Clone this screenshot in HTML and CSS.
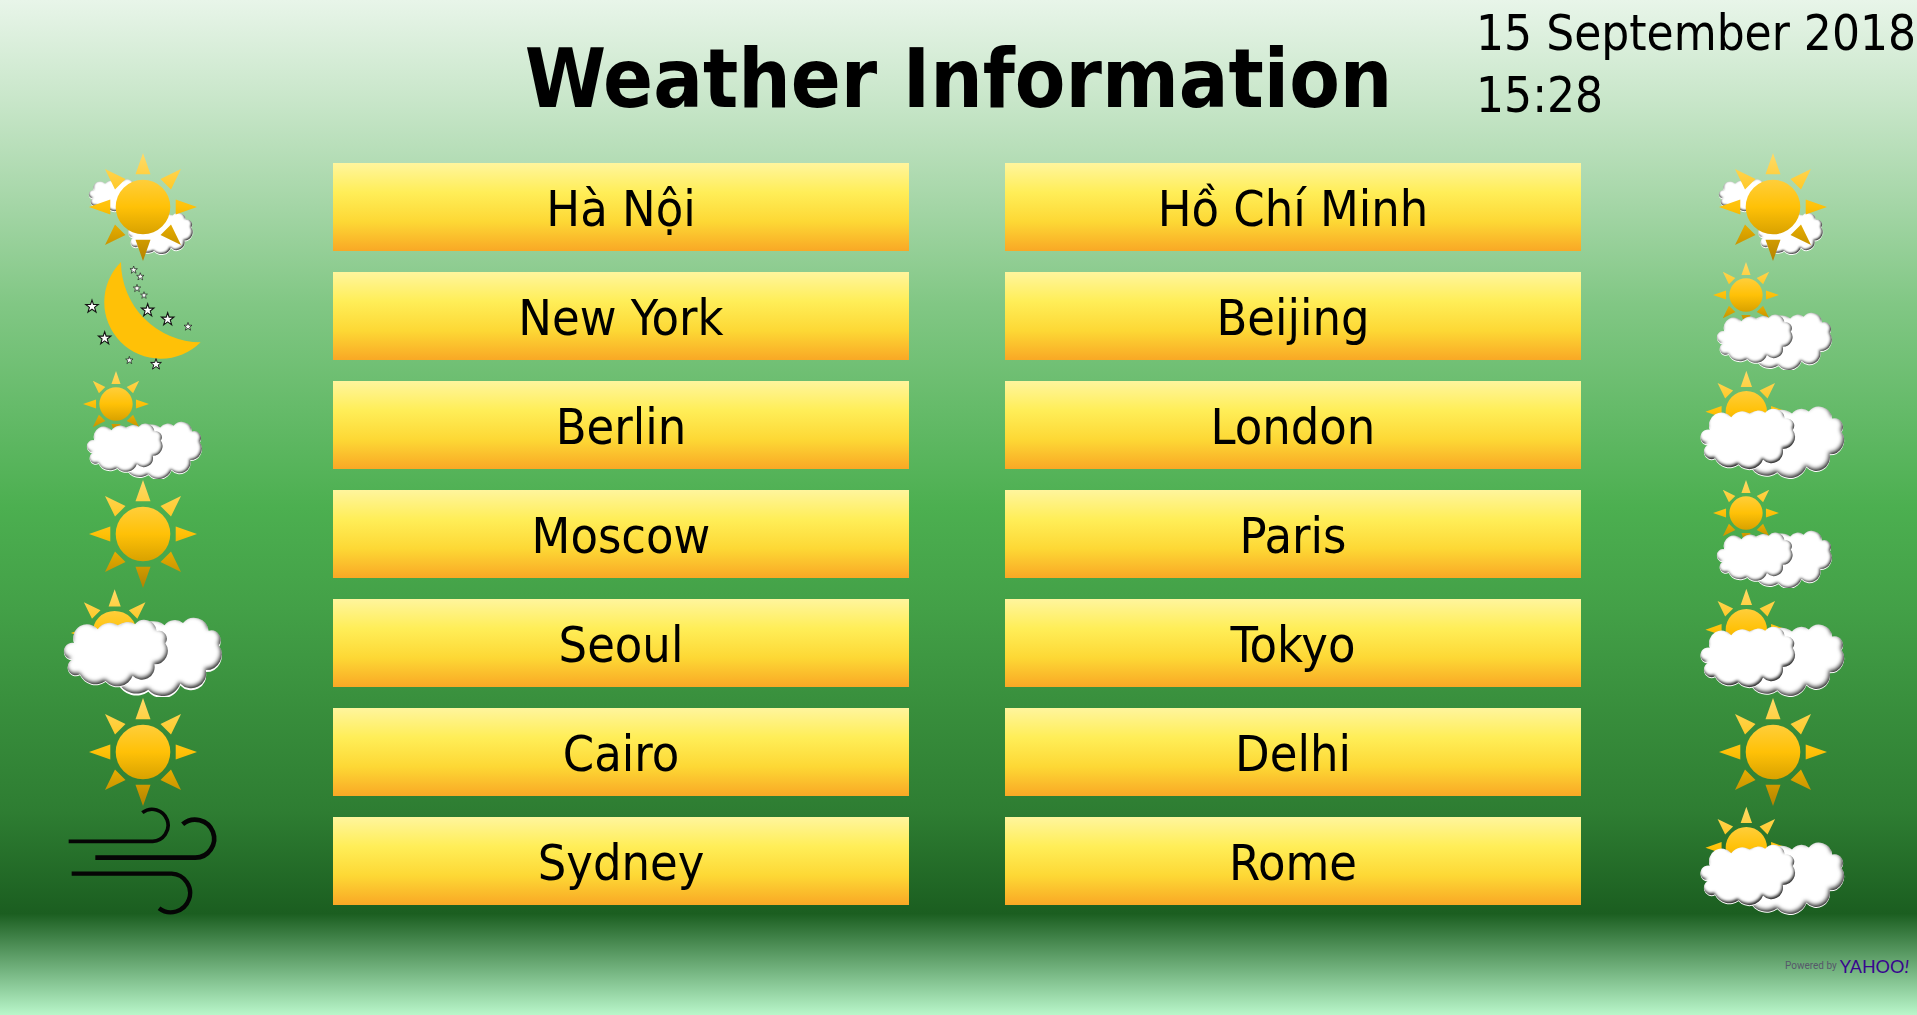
FILE: index.html
```html
<!DOCTYPE html>
<html lang="en">
<head>
<meta charset="utf-8">
<meta name="viewport" content="width=device-width, initial-scale=1">
<title>Weather Information</title>
<link rel="stylesheet" href="styles.css">
</head>
<body>
<svg class="defs" aria-hidden="true" width="0" height="0">
  <defs>
    <linearGradient id="sun-fill" gradientUnits="userSpaceOnUse" x1="0" y1="-54" x2="0" y2="54">
      <stop offset="0" stop-color="#ffdb69"/>
      <stop offset=".25" stop-color="#ffce3a"/>
      <stop offset=".5" stop-color="#ffc107"/>
      <stop offset=".75" stop-color="#d9a200"/>
      <stop offset="1" stop-color="#b38200"/>
    </linearGradient>
    <filter id="bevel" x="-5%" y="-5%" width="110%" height="112%" color-interpolation-filters="sRGB">
      <feFlood flood-color="#222" result="dark"/>
      <feComposite in="dark" in2="SourceAlpha" operator="out" result="outside"/>
      <feGaussianBlur in="outside" stdDeviation="6" result="soft"/>
      <feOffset in="soft" dx="-3" dy="-5" result="moved"/>
      <feComposite in="moved" in2="SourceAlpha" operator="in" result="shade"/>
      <feOffset in="SourceGraphic" dx="1" dy="4" result="rim"/>
      <feMerge>
        <feMergeNode in="rim"/>
        <feMergeNode in="SourceGraphic"/>
        <feMergeNode in="shade"/>
      </feMerge>
    </filter>
    <g id="sun" fill="url(#sun-fill)">
      <path d="M-27.3 0a27.3 27.3 0 1 0 54.6 0a27.3 27.3 0 1 0-54.6 0ZM0-54L-7.5-32.7H7.5ZM54 0L32.7-7.5V7.5ZM0 54L-7.5 32.7H7.5ZM-54 0L-32.7-7.5V7.5ZM-38-38L-28-17.5L-17.5-28ZM38-38L28-17.5L17.5-28ZM38 38L28 17.5L17.5 28ZM-38 38L-28 17.5L-17.5 28Z"/>
    </g>
    <path id="cloud" fill="#fff" filter="url(#bevel)" d="M72 235A25 25 0 1 1 68 188A41 41 0 0 1 138 147A44 44 0 0 1 203 138A33 33 0 0 1 250 132A37 37 0 0 1 315 152A24 24 0 0 1 341 189A40 40 0 0 1 308 252A38 38 0 0 1 243 286A48 48 0 0 1 162 302A52 52 0 0 1 85 282A25 25 0 1 1 72 235Z"/>
    <g id="cloud-pair">
      <use href="#cloud" transform="translate(99 -28) scale(1.18)"/>
      <use href="#cloud"/>
    </g>
    <path id="star" fill="#fff" stroke="#111" stroke-width="3" d="M0-18L4-6H17L7 2L11 15L0 7L-11 15L-7 2L-17-6H-4Z"/>
    <symbol id="icon-sunny" viewBox="34 0 480 324">
      <use href="#sun" transform="translate(274 162) scale(3)"/>
    </symbol>
    <symbol id="icon-fair" viewBox="34 0 480 324">
      <use href="#cloud" transform="translate(94 22) scale(.48)"/>
      <use href="#cloud" transform="translate(207 106) scale(.62)"/>
      <use href="#sun" transform="translate(274 162) scale(3)"/>
    </symbol>
    <symbol id="icon-partly" viewBox="34 0 480 324">
      <use href="#sun" transform="translate(193 99) scale(1.83)"/>
      <use href="#cloud-pair" transform="translate(79 71) scale(.728)"/>
    </symbol>
    <symbol id="icon-mostly" viewBox="34 0 480 324">
      <use href="#sun" transform="translate(194 122) scale(2.27)"/>
      <use href="#cloud-pair" transform="translate(23 5) scale(.91)"/>
    </symbol>
    <symbol id="icon-overcast" viewBox="34 0 480 324">
      <use href="#sun" transform="translate(189 132) scale(2.43)"/>
      <use href="#cloud-pair" transform="translate(0 -26)"/>
    </symbol>
    <symbol id="icon-night" viewBox="34 0 480 324">
      <path fill="#ffc107" d="M208 0A169 169 0 0 0 447 241A241 241 0 0 1 208 0Z"/>
      <use href="#star" transform="translate(246 24) scale(.65)"/>
      <use href="#star" transform="translate(266 44) scale(.65)"/>
      <use href="#star" transform="translate(256 79) scale(.65)"/>
      <use href="#star" transform="translate(277 100) scale(.6)"/>
      <use href="#star" transform="translate(288 145) scale(1.1)"/>
      <use href="#star" transform="translate(348 172) scale(1.1)"/>
      <use href="#star" transform="translate(409 194) scale(.7)"/>
      <use href="#star" transform="translate(121 134) scale(1.1)"/>
      <use href="#star" transform="translate(159 229) scale(1.1)"/>
      <use href="#star" transform="translate(233 295) scale(.65)"/>
      <use href="#star" transform="translate(313 307) scale(.95)"/>
    </symbol>
    <symbol id="icon-wind" viewBox="34 0 480 324">
      <g fill="none" stroke="#050505">
        <path stroke-width="11" d="M51 103H303A48 48 0 1 0 272 17"/>
        <path stroke-width="14" d="M131 152H431A57 57 0 1 0 393 52"/>
        <path stroke-width="13" d="M60 200H360A58 58 0 1 1 322 304"/>
      </g>
    </symbol>
  </defs>
</svg>

<header class="header">
  <h1 class="title">Weather Information</h1>
  <div class="clock">
    <div>15 September 2018</div>
    <div>15:28</div>
  </div>
</header>

<main class="cities">
  <div class="row">
    <svg class="icon" role="img" aria-label="Fair"><use href="#icon-fair"/></svg>
    <button class="city" type="button">Hà Nội</button>
    <button class="city" type="button">Hồ Chí Minh</button>
    <svg class="icon" role="img" aria-label="Fair"><use href="#icon-fair"/></svg>
  </div>
  <div class="row">
    <svg class="icon" role="img" aria-label="Clear night"><use href="#icon-night"/></svg>
    <button class="city" type="button">New York</button>
    <button class="city" type="button">Beijing</button>
    <svg class="icon" role="img" aria-label="Partly cloudy"><use href="#icon-partly"/></svg>
  </div>
  <div class="row">
    <svg class="icon" role="img" aria-label="Partly cloudy"><use href="#icon-partly"/></svg>
    <button class="city" type="button">Berlin</button>
    <button class="city" type="button">London</button>
    <svg class="icon" role="img" aria-label="Mostly cloudy"><use href="#icon-mostly"/></svg>
  </div>
  <div class="row">
    <svg class="icon" role="img" aria-label="Sunny"><use href="#icon-sunny"/></svg>
    <button class="city" type="button">Moscow</button>
    <button class="city" type="button">Paris</button>
    <svg class="icon" role="img" aria-label="Partly cloudy"><use href="#icon-partly"/></svg>
  </div>
  <div class="row">
    <svg class="icon" role="img" aria-label="Cloudy"><use href="#icon-overcast"/></svg>
    <button class="city" type="button">Seoul</button>
    <button class="city" type="button">Tokyo</button>
    <svg class="icon" role="img" aria-label="Mostly cloudy"><use href="#icon-mostly"/></svg>
  </div>
  <div class="row">
    <svg class="icon" role="img" aria-label="Sunny"><use href="#icon-sunny"/></svg>
    <button class="city" type="button">Cairo</button>
    <button class="city" type="button">Delhi</button>
    <svg class="icon" role="img" aria-label="Sunny"><use href="#icon-sunny"/></svg>
  </div>
  <div class="row">
    <svg class="icon" role="img" aria-label="Windy"><use href="#icon-wind"/></svg>
    <button class="city" type="button">Sydney</button>
    <button class="city" type="button">Rome</button>
    <svg class="icon" role="img" aria-label="Mostly cloudy"><use href="#icon-mostly"/></svg>
  </div>
</main>

<footer class="footer">
  <a class="credit" href="#"><span>Powered by</span><span class="brand">YAHOO<i>!</i></span></a>
</footer>
</body>
</html>
```
FILE: styles.css
```css
* {
  box-sizing: border-box;
}

html {
  min-height: 100%;
  background: linear-gradient(#e8f5e9, #c8e6c9, #a5d6a7, #81c784, #66bb6a, #4caf50, #43a047, #388e3c, #2e7d32, #1b5e20, #b9f6ca);
}

body {
  margin: 0;
  color: #000;
  font-family: Tahoma, "DejaVu Sans Condensed", "DejaVu Sans", sans-serif;
}

.defs {
  position: absolute;
}

.header {
  display: grid;
  grid-template-columns: 23fr 54fr 23fr;
  min-height: 153px;
}

.title {
  grid-column: 2;
  margin: 0;
  padding-top: 30px;
  font-size: 82px;
  line-height: 98px;
  text-align: center;
  white-space: nowrap;
}

.clock {
  padding-top: 3px;
  font-size: 49px;
  line-height: 62px;
  white-space: nowrap;
}

.row {
  display: grid;
  grid-template-columns: 285fr 576fr 624fr 288fr;
  column-gap: 48px;
  align-items: start;
  height: 109px;
}

.icon {
  width: 160px;
  height: 108px;
  justify-self: center;
}

.city {
  height: 88px;
  margin: 10px 0 0;
  padding: 4px 0 0;
  border: 0;
  background: linear-gradient(#fff59d, #ffee58, #fdd835, #f9a825);
  color: inherit;
  font: inherit;
  font-size: 50px;
  line-height: 84px;
  text-align: center;
}

.city + .city {
  margin-left: 48px;
}

.footer {
  display: flex;
  justify-content: flex-end;
  padding: 38px 8px 0;
}

.credit {
  display: flex;
  align-items: center;
  gap: 3px;
  color: #56586a;
  font-family: Roboto, sans-serif;
  font-size: 10px;
  line-height: 24px;
  text-decoration: none;
}

.brand {
  color: #38058f;
  font-family: Lato, sans-serif;
  font-size: 18px;
}
```
